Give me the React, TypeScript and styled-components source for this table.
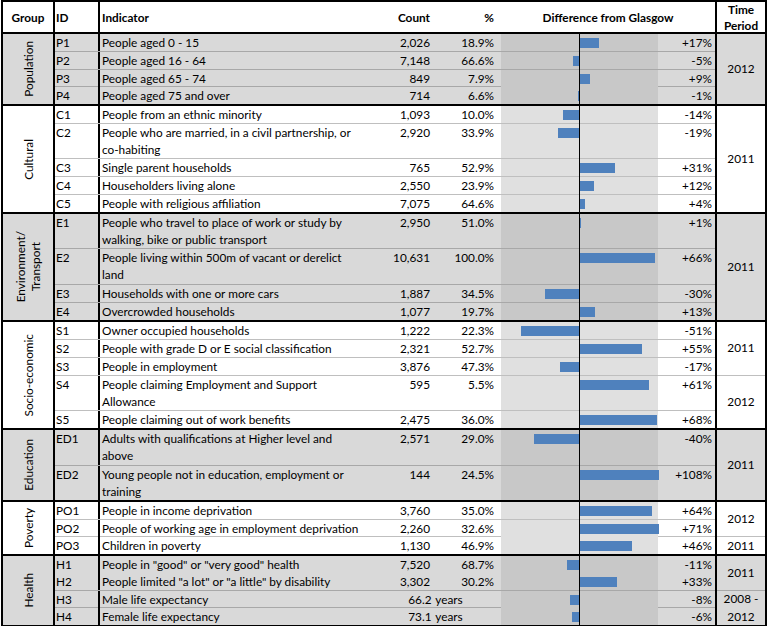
import React from "react";
import styled, { createGlobalStyle, css } from "styled-components";

const GlobalStyle = createGlobalStyle`
  html, body { margin: 0; padding: 0; background: #ffffff; }
  body {
    font-family: Lato, "Open Sans", "Liberation Sans", sans-serif;
    font-size: 11.8px;
    color: #000000;
  }
`;

type Tone = "grey" | "white";
type Indicator = {
  id: string;
  lines: string[];
  count?: string;
  pct?: string;
  combined?: string;
  diff: number;
  noLine?: boolean;
};
type Period = { span: number; lines: string[] };
type Group = { label: string[]; tone: Tone; rows: Indicator[]; periods: Period[] };

const ROW_H = 18;
const BAND_CENTER = 78;
const SCALE = 1.13;
const BAR_MAX = 79;

const groups: Group[] = [
  {
    label: ["Population"],
    tone: "grey",
    periods: [{ span: 4, lines: ["2012"] }],
    rows: [
      { id: "P1", lines: ["People aged 0 - 15"], count: "2,026", pct: "18.9%", diff: 17 },
      { id: "P2", lines: ["People aged 16 - 64"], count: "7,148", pct: "66.6%", diff: -5 },
      { id: "P3", lines: ["People aged 65 - 74"], count: "849", pct: "7.9%", diff: 9 },
      { id: "P4", lines: ["People aged 75 and over"], count: "714", pct: "6.6%", diff: -1 },
    ],
  },
  {
    label: ["Cultural"],
    tone: "white",
    periods: [{ span: 6, lines: ["2011"] }],
    rows: [
      { id: "C1", lines: ["People from an ethnic minority"], count: "1,093", pct: "10.0%", diff: -14 },
      {
        id: "C2",
        lines: ["People who are married, in a civil partnership, or", "co-habiting"],
        count: "2,920",
        pct: "33.9%",
        diff: -19,
      },
      { id: "C3", lines: ["Single parent households"], count: "765", pct: "52.9%", diff: 31 },
      { id: "C4", lines: ["Householders living alone"], count: "2,550", pct: "23.9%", diff: 12 },
      { id: "C5", lines: ["People with religious affiliation"], count: "7,075", pct: "64.6%", diff: 4 },
    ],
  },
  {
    label: ["Environment/", "Transport"],
    tone: "grey",
    periods: [{ span: 6, lines: ["2011"] }],
    rows: [
      {
        id: "E1",
        lines: ["People who travel to place of work or study by", "walking, bike or public transport"],
        count: "2,950",
        pct: "51.0%",
        diff: 1,
      },
      {
        id: "E2",
        lines: ["People living within 500m of vacant or derelict", "land"],
        count: "10,631",
        pct: "100.0%",
        diff: 66,
      },
      { id: "E3", lines: ["Households with one or more cars"], count: "1,887", pct: "34.5%", diff: -30 },
      { id: "E4", lines: ["Overcrowded households"], count: "1,077", pct: "19.7%", diff: 13 },
    ],
  },
  {
    label: ["Socio-economic"],
    tone: "white",
    periods: [
      { span: 3, lines: ["2011"] },
      { span: 3, lines: ["2012"] },
    ],
    rows: [
      { id: "S1", lines: ["Owner occupied households"], count: "1,222", pct: "22.3%", diff: -51 },
      {
        id: "S2",
        lines: ["People with grade D or E social classification"],
        count: "2,321",
        pct: "52.7%",
        diff: 55,
      },
      { id: "S3", lines: ["People in employment"], count: "3,876", pct: "47.3%", diff: -17 },
      {
        id: "S4",
        lines: ["People claiming Employment and Support", "Allowance"],
        count: "595",
        pct: "5.5%",
        diff: 61,
      },
      { id: "S5", lines: ["People claiming out of work benefits"], count: "2,475", pct: "36.0%", diff: 68 },
    ],
  },
  {
    label: ["Education"],
    tone: "grey",
    periods: [{ span: 4, lines: ["2011"] }],
    rows: [
      {
        id: "ED1",
        lines: ["Adults with qualifications at Higher level and", "above"],
        count: "2,571",
        pct: "29.0%",
        diff: -40,
      },
      {
        id: "ED2",
        lines: ["Young people not in education, employment or", "training"],
        count: "144",
        pct: "24.5%",
        diff: 108,
      },
    ],
  },
  {
    label: ["Poverty"],
    tone: "white",
    periods: [
      { span: 2, lines: ["2012"] },
      { span: 1, lines: ["2011"] },
    ],
    rows: [
      { id: "PO1", lines: ["People in income deprivation"], count: "3,760", pct: "35.0%", diff: 64 },
      {
        id: "PO2",
        lines: ["People of working age in employment deprivation"],
        count: "2,260",
        pct: "32.6%",
        diff: 71,
      },
      { id: "PO3", lines: ["Children in poverty"], count: "1,130", pct: "46.9%", diff: 46 },
    ],
  },
  {
    label: ["Health"],
    tone: "grey",
    periods: [
      { span: 2, lines: ["2011"] },
      { span: 2, lines: ["2008 -", "2012"] },
    ],
    rows: [
      {
        id: "H1",
        lines: ['People in "good" or "very good" health'],
        count: "7,520",
        pct: "68.7%",
        diff: -11,
        noLine: true,
      },
      {
        id: "H2",
        lines: ['People limited "a lot" or "a little" by disability'],
        count: "3,302",
        pct: "30.2%",
        diff: 33,
      },
      { id: "H3", lines: ["Male life expectancy"], combined: "66.2 years", diff: -8 },
      { id: "H4", lines: ["Female life expectancy"], combined: "73.1 years", diff: -6 },
    ],
  },
];

const tones = {
  grey: { bg: "#d9d9d9", band: "#c8c8c8", rule: "#a8a8a8" },
  white: { bg: "#ffffff", band: "#e0e0e0", rule: "#bfbfbf" },
};

const ROW_COLS = "45px 270px 64px 67px 157px 57px";

const Table = styled.div`
  margin: 0 0 0 1px;
  width: 766px;
  box-sizing: border-box;
  border: 2px solid #000;
  border-bottom-width: 1px;
`;

const HeaderRow = styled.div`
  display: grid;
  grid-template-columns: 52px 45px 270px 64px 67px 214px 50px;
  height: 32px;
  box-sizing: border-box;
  border-bottom: 2px solid #000;
  font-weight: 700;
  background: #fff;
`;

const HeadCell = styled.div<{ $align?: "left" | "center" | "right"; $pad?: number; $rule?: "left" | "right" }>`
  display: flex;
  align-items: center;
  justify-content: ${(p) =>
    p.$align === "right" ? "flex-end" : p.$align === "center" ? "center" : "flex-start"};
  text-align: ${(p) => p.$align ?? "left"};
  padding: ${(p) => (p.$align === "right" ? `0 ${p.$pad ?? 0}px 0 0` : `0 0 0 ${p.$pad ?? 0}px`)};
  line-height: 16px;
  white-space: nowrap;
  ${(p) => p.$rule === "right" && css`border-right: 2px solid #000;`}
  ${(p) => p.$rule === "left" && css`border-left: 2px solid #000;`}
`;

const GroupBlock = styled.div<{ $tone: Tone; $lines: number }>`
  display: flex;
  height: ${(p) => p.$lines * ROW_H}px;
  box-sizing: border-box;
  border-bottom: 2px solid #000;
  background: ${(p) => tones[p.$tone].bg};
  &:last-child {
    height: ${(p) => p.$lines * ROW_H - 3}px;
    border-bottom: 0;
  }
`;

const GroupLabel = styled.div`
  flex: none;
  width: 52px;
  box-sizing: border-box;
  border-right: 2px solid #000;
  display: flex;
  align-items: center;
  justify-content: center;
`;

const RotatedText = styled.div`
  writing-mode: vertical-rl;
  transform: rotate(180deg);
  text-align: center;
  line-height: 15px;
  white-space: nowrap;
`;

const Rows = styled.div`
  flex: 1;
  display: flex;
  flex-direction: column;
`;

const Row = styled.div<{ $lines: number; $rule: string | null }>`
  flex: ${(p) => p.$lines} 1 0;
  min-height: 0;
  display: grid;
  grid-template-columns: ${ROW_COLS};
  border-bottom: ${(p) => (p.$rule ? `1px solid ${p.$rule}` : "0")};
  line-height: 17px;
`;

const IdCell = styled.div`
  border-right: 2px solid #000;
  padding-left: 1px;
  white-space: nowrap;
`;

const TextCell = styled.div`
  padding-left: 2px;
  white-space: nowrap;
`;

const NumCell = styled.div<{ $pad: number; $span?: boolean }>`
  text-align: right;
  padding-right: ${(p) => p.$pad}px;
  white-space: nowrap;
  ${(p) =>
    p.$span &&
    css`
      grid-column: span 2;
      text-align: center;
      padding-right: 0;
      word-spacing: 1px;
    `}
`;

const Band = styled.div<{ $tone: Tone }>`
  position: relative;
  background: ${(p) => tones[p.$tone].band};
  &::after {
    content: "";
    position: absolute;
    left: ${BAND_CENTER}px;
    top: 0;
    bottom: -1px;
    width: 1px;
    background: #000;
  }
`;

const Bar = styled.div`
  position: absolute;
  top: 4px;
  height: 10px;
  background: #4f81bd;
`;

const TimeColumn = styled.div`
  flex: none;
  width: 50px;
  box-sizing: border-box;
  border-left: 2px solid #000;
  display: flex;
  flex-direction: column;
`;

const TimeCell = styled.div<{ $span: number; $rule: string | null }>`
  flex: ${(p) => p.$span} 1 0;
  min-height: 0;
  display: flex;
  flex-direction: column;
  align-items: center;
  justify-content: center;
  text-align: center;
  line-height: 18px;
  border-bottom: ${(p) => (p.$rule ? `1px solid ${p.$rule}` : "0")};
`;

function DiffBar({ value }: { value: number }) {
  const w = Math.max(1, Math.min(BAR_MAX, Math.round(Math.abs(value) * SCALE)));
  const left = value < 0 ? BAND_CENTER - w : BAND_CENTER + 1;
  return <Bar style={{ left, width: w }} />;
}

function GroupSection({ group }: { group: Group }) {
  const lineCount = group.rows.reduce((n, r) => n + r.lines.length, 0);
  const rule = tones[group.tone].rule;
  return (
    <GroupBlock $tone={group.tone} $lines={lineCount}>
      <GroupLabel>
        <RotatedText>
          {group.label.map((l) => (
            <div key={l}>{l}</div>
          ))}
        </RotatedText>
      </GroupLabel>
      <Rows>
        {group.rows.map((r, i) => {
          const last = i === group.rows.length - 1;
          return (
            <Row key={r.id} $lines={r.lines.length} $rule={last || r.noLine ? null : rule}>
              <IdCell>{r.id}</IdCell>
              <TextCell>
                {r.lines.map((l) => (
                  <div key={l}>{l}</div>
                ))}
              </TextCell>
              {r.combined ? (
                <NumCell $pad={0} $span>
                  {r.combined}
                </NumCell>
              ) : (
                <>
                  <NumCell $pad={4}>{r.count}</NumCell>
                  <NumCell $pad={7}>{r.pct}</NumCell>
                </>
              )}
              <Band $tone={group.tone}>
                <DiffBar value={r.diff} />
              </Band>
              <NumCell $pad={3}>{(r.diff > 0 ? "+" : "") + r.diff + "%"}</NumCell>
            </Row>
          );
        })}
      </Rows>
      <TimeColumn>
        {group.periods.map((p, i) => (
          <TimeCell key={i} $span={p.span} $rule={i === group.periods.length - 1 ? null : rule}>
            {p.lines.map((l) => (
              <div key={l}>{l}</div>
            ))}
          </TimeCell>
        ))}
      </TimeColumn>
    </GroupBlock>
  );
}

export default function App() {
  return (
    <>
      <GlobalStyle />
      <Table>
        <HeaderRow>
          <HeadCell $align="center" $rule="right">
            Group
          </HeadCell>
          <HeadCell $pad={1} $rule="right">
            ID
          </HeadCell>
          <HeadCell $pad={2}>Indicator</HeadCell>
          <HeadCell $align="right" $pad={4}>
            Count
          </HeadCell>
          <HeadCell $align="right" $pad={7}>
            %
          </HeadCell>
          <HeadCell $align="center">Difference from Glasgow</HeadCell>
          <HeadCell $align="center" $rule="left">
            Time
            <br />
            Period
          </HeadCell>
        </HeaderRow>
        {groups.map((g) => (
          <GroupSection key={g.label.join(" ")} group={g} />
        ))}
      </Table>
    </>
  );
}
